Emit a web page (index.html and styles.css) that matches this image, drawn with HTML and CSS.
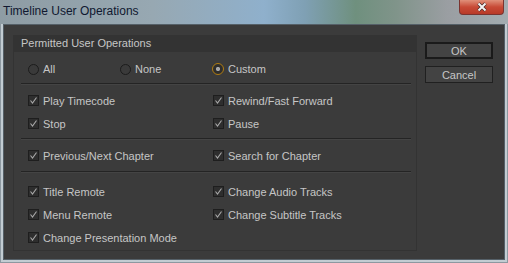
FILE: index.html
```html
<!DOCTYPE html>
<html lang="en">

<head>
    <meta charset="UTF-8">
    <title>Timeline User Operations</title>
    <link rel="stylesheet" href="styles.css">
</head>

<body>
    <div class="window">
        <div class="titlebar">
            <span class="title">Timeline User Operations</span>
            <div class="close">
                <svg width="14" height="10" viewBox="0 0 14 10"><path d="M3.5 1.5 L10.5 8.5 M10.5 1.5 L3.5 8.5" stroke="#4a2a28" stroke-width="3.4"/><path d="M3.5 1.5 L10.5 8.5 M10.5 1.5 L3.5 8.5" stroke="#f4f4f4" stroke-width="2"/></svg>
            </div>
        </div>
        <div class="frame">
            <div class="client">
                <div class="group">
                    <div class="group-head">Permitted User Operations</div>

                    <div class="row radios">
                        <label class="opt w92"><span class="radio"></span>All</label>
                        <label class="opt w92"><span class="radio"></span>None</label>
                        <label class="opt"><span class="radio on"></span>Custom</label>
                    </div>
                    <div class="sep"></div>

                    <div class="row"><label class="opt col"><span class="check"></span>Play Timecode</label><label class="opt"><span class="check"></span>Rewind/Fast Forward</label></div>
                    <div class="row"><label class="opt col"><span class="check"></span>Stop</label><label class="opt"><span class="check"></span>Pause</label></div>
                    <div class="sep"></div>

                    <div class="row"><label class="opt col"><span class="check"></span>Previous/Next Chapter</label><label class="opt"><span class="check"></span>Search for Chapter</label></div>
                    <div class="sep last"></div>

                    <div class="row"><label class="opt col"><span class="check"></span>Title Remote</label><label class="opt"><span class="check"></span>Change Audio Tracks</label></div>
                    <div class="row"><label class="opt col"><span class="check"></span>Menu Remote</label><label class="opt"><span class="check"></span>Change Subtitle Tracks</label></div>
                    <div class="row"><label class="opt col"><span class="check"></span>Change Presentation Mode</label></div>
                </div>

                <div class="buttons">
                    <button class="btn default">OK</button>
                    <button class="btn">Cancel</button>
                </div>
            </div>
        </div>
    </div>

    <script>
        // draw the tick into every checkbox
        var checks = document.querySelectorAll(".check");
        for (let i = 0; i < checks.length; i++) {
            checks[i].innerHTML = '<svg width="9" height="9" viewBox="0 0 9 9"><path d="M1.5 4.5 L3.5 7 L7.5 1.5" fill="none" stroke="#a8a8a8" stroke-width="1.1"/></svg>';
        }
    </script>
</body>

</html>
```

FILE: styles.css
```css
* {
    margin: 0px;
    padding: 0px;
    box-sizing: border-box;
}

body {
    width: 508px;
    height: 263px;
    overflow: hidden;
    font-family: "Liberation Sans", Arial, sans-serif;
    background: #9aa6ac;
}

.window {
    width: 508px;
    height: 263px;
    display: flex;
    flex-direction: column;
    background: linear-gradient(90deg, #8e9ca4 0%, #97a8b2 30%, #8fb0cc 52%, #7fa0b4 60%, #6f907e 70%, #80948a 78%, #9a9ea2 88%, #a3adb1 100%);
}

.titlebar {
    height: 24px;
    display: flex;
    align-items: flex-start;
    justify-content: space-between;
}

.title {
    font-family: "Liberation Sans", Arial, sans-serif;
    font-size: 12px;
    color: #101830;
    padding: 4px 0 0 3px;
}

.close {
    width: 45px;
    height: 15px;
    margin-right: 4px;
    border: 1px solid #7a3430;
    border-top: none;
    border-radius: 0 0 4px 4px;
    background: linear-gradient(#e0907a, #c84a36 50%, #b83a28);
    display: flex;
    align-items: center;
    justify-content: center;
}

.frame {
    flex: 1;
    padding: 0 2px 2px 2px;
    background: #c2ccd2;
    border: 1px solid #8c98a0;
    border-top: none;
}

.client {
    height: 100%;
    background: #3b3b3b;
    border: 1px solid #556068;
    display: flex;
    gap: 8px;
    padding: 10px 0 0 9px;
}

.group {
    width: 404px;
    height: 216px;
    border: 1px solid #333333;
    background: #3b3b3b;
}

.group-head {
    height: 16px;
    background: #333333;
    color: #c6c6c6;
    font-size: 11px;
    line-height: 15px;
    padding-left: 7px;
}

.row {
    display: flex;
    height: 23px;
    align-items: center;
    padding-left: 14px;
    color: #c6c6c6;
    font-size: 11px;
}

.radios {
    height: 22px;
    margin-top: 6px;
}

.opt {
    display: flex;
    align-items: center;
    gap: 4px;
}

.w92 {
    width: 92px;
}

.col {
    width: 185px;
}

.radio {
    width: 11px;
    height: 11px;
    border-radius: 50%;
    border: 1px solid #1c1c1c;
    background: #3a3a3a;
}

.radio.on {
    width: 12px;
    height: 12px;
    border: 1px solid #b07c10;
    background: radial-gradient(circle, #a8a8a8 0 1.8px, #2e2e2e 2.4px);
}

.check {
    width: 11px;
    height: 11px;
    border: 1px solid #1e1e1e;
    background: #2e2e2e;
    display: flex;
    align-items: center;
    justify-content: center;
}

.sep {
    height: 2px;
    background: #242424;
    border-bottom: 1px solid #444444;
    margin: 3px 5px 4px 7px;
}

.sep.last {
    margin-top: 4px;
    margin-bottom: 7px;
}

.buttons {
    display: flex;
    flex-direction: column;
    gap: 7px;
    padding-top: 7px;
}

.btn {
    width: 68px;
    height: 17px;
    font-family: "Liberation Sans", Arial, sans-serif;
    font-size: 11px;
    color: #c6c6c6;
    background: #434343;
    border: 1px solid #202020;
}

.btn.default {
    border: 2px solid #1a1a1a;
}
```
